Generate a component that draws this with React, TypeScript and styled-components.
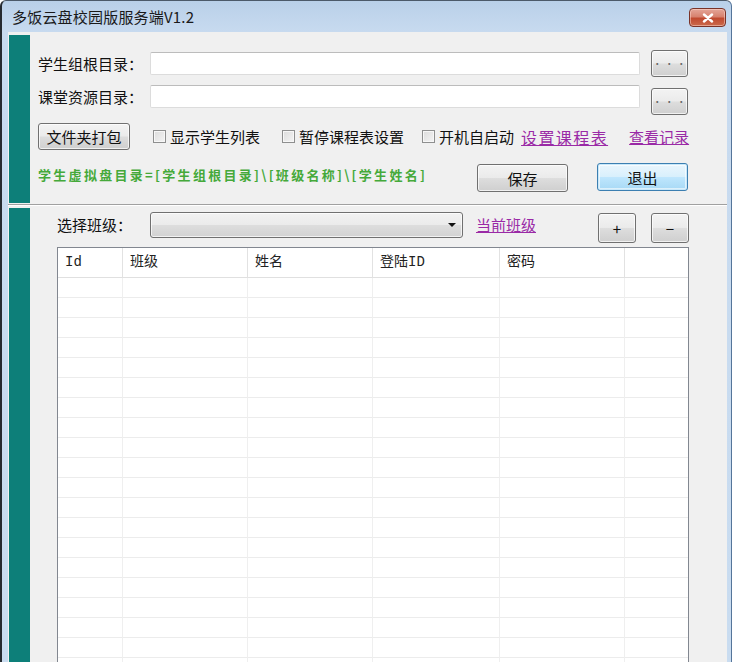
import React from "react";
import styled, { createGlobalStyle, css } from "styled-components";

const GlobalStyle = createGlobalStyle`
  html, body {
    margin: 0;
    padding: 0;
    overflow: hidden;
    background: #ffffff;
  }
  body {
    font-family: "Noto Sans CJK SC", "Noto Sans", sans-serif;
    color: #111;
  }
`;

const GREEN_HINT = "学生虚拟盘目录=[学生组根目录]\\[班级名称]\\[学生姓名]";
const COLUMNS = ["Id", "班级", "姓名", "登陆ID", "密码", ""];
const ROW_COUNT = 20;

export default function App() {
  return (
    <>
      <GlobalStyle />
      <Window>
        <TitleBar>
          <Title>多饭云盘校园版服务端V1.2</Title>
          <CloseButton aria-label="关闭">
            <svg width="12" height="10" viewBox="0 0 12 10">
              <path
                d="M2 1.5 L10 8.5 M10 1.5 L2 8.5"
                stroke="#fff"
                strokeWidth="2.4"
                strokeLinecap="round"
              />
            </svg>
          </CloseButton>
        </TitleBar>

        <Body>
          <TopPanel>
            <Stripe />
            <TopContent>
              <Row>
                <FieldLabel $mt={0} $lh={27}>学生组根目录：</FieldLabel>
                <PathInput $mt={2} />
                <BrowseButton $mt={0}>· · ·</BrowseButton>
              </Row>
              <Row $mt={7}>
                <FieldLabel $mt={1} $lh={23}>课堂资源目录：</FieldLabel>
                <PathInput $mt={1} />
                <BrowseButton $mt={4}>· · ·</BrowseButton>
              </Row>
              <OptionsRow>
                <PackButton>文件夹打包</PackButton>
                <CheckItem $ml={23}>
                  <CheckBox />
                  显示学生列表
                </CheckItem>
                <CheckItem $ml={22}>
                  <CheckBox />
                  暂停课程表设置
                </CheckItem>
                <CheckItem $ml={18}>
                  <CheckBox />
                  开机自启动
                </CheckItem>
                <LinkText $ml={7} $wide>设置课程表</LinkText>
                <LinkText $ml={21}>查看记录</LinkText>
              </OptionsRow>
              <FooterRow>
                <HintText>{GREEN_HINT}</HintText>
                <ActionGroup>
                  <ActionButton $mt={1}>保存</ActionButton>
                  <ActionButton $mt={0} $primary>退出</ActionButton>
                </ActionGroup>
              </FooterRow>
            </TopContent>
          </TopPanel>

          <Divider />

          <BottomPanel>
            <Stripe />
            <BottomContent>
              <ClassRow>
                <ClassLabel>选择班级：</ClassLabel>
                <Combo>
                  <ComboArrow />
                </Combo>
                <LinkText $ml={13} $lh={26}>当前班级</LinkText>
                <SmallButton $ml={62}>+</SmallButton>
                <SmallButton $ml={15}>−</SmallButton>
              </ClassRow>
              <Grid>
                {COLUMNS.map((c, i) => (
                  <HeaderCell key={"h" + i}>{c}</HeaderCell>
                ))}
                {Array.from({ length: ROW_COUNT }).map((_, r) =>
                  COLUMNS.map((_, c) => <Cell key={r + "-" + c} />)
                )}
              </Grid>
            </BottomContent>
          </BottomPanel>
        </Body>
      </Window>
    </>
  );
}

const Window = styled.div`
  width: 732px;
  height: 662px;
  box-sizing: border-box;
  display: flex;
  flex-direction: column;
  overflow: hidden;
  background: linear-gradient(180deg, #b9d0e9 0px, #c7daef 30px, #c9dcf0 100%);
  border-top: 1px solid #4c5a6a;
  border-left: 2px solid #262a30;
  border-right: 1px solid #55759a;
  border-top-left-radius: 6px;
  border-top-right-radius: 6px;
`;

const TitleBar = styled.div`
  height: 31px;
  flex: none;
  display: flex;
  align-items: flex-start;
  justify-content: space-between;
  padding: 0 5px 0 10px;
`;

const Title = styled.div`
  font-size: 15px;
  line-height: 31px;
  color: #1a1a1a;
  letter-spacing: 0.2px;
`;

const CloseButton = styled.div`
  margin-top: 7px;
  width: 37px;
  height: 19px;
  box-sizing: border-box;
  display: flex;
  align-items: center;
  justify-content: center;
  border: 1px solid #7a3328;
  border-radius: 4px;
  background: linear-gradient(
    180deg,
    #e4a699 0%,
    #d7826f 45%,
    #c04a30 55%,
    #cb6a4b 100%
  );
  box-shadow: inset 0 0 0 1px rgba(255, 220, 210, 0.5);
`;

const Body = styled.div`
  flex: 1;
  margin: 0 4px 0 6px;
  background: #f0f0f0;
  display: flex;
  flex-direction: column;
  min-height: 0;
`;

const TopPanel = styled.div`
  height: 172px;
  box-sizing: border-box;
  padding: 3px 0 1px 1px;
  display: flex;
  flex: none;
`;

const Stripe = styled.div`
  width: 21px;
  flex: none;
  background: #0d7f79;
`;

const TopContent = styled.div`
  width: 650px;
  padding: 15px 0 0 8px;
  display: flex;
  flex-direction: column;
`;

const Row = styled.div<{ $mt?: number }>`
  display: flex;
  align-items: flex-start;
  margin-top: ${({ $mt }) => $mt ?? 0}px;
`;

const FieldLabel = styled.div<{ $mt: number; $lh: number }>`
  width: 112px;
  flex: none;
  font-size: 15px;
  margin-top: ${({ $mt }) => $mt}px;
  line-height: ${({ $lh }) => $lh}px;
`;

const PathInput = styled.div<{ $mt: number }>`
  width: 490px;
  height: 23px;
  box-sizing: border-box;
  margin-top: ${({ $mt }) => $mt}px;
  background: #ffffff;
  border: 1px solid #dcdcdc;
  border-top-color: #bcbcbc;
  border-radius: 2px;
`;

const buttonBase = css`
  box-sizing: border-box;
  display: flex;
  align-items: center;
  justify-content: center;
  flex: none;
  border: 1px solid #707070;
  border-radius: 3px;
  background: linear-gradient(
    180deg,
    #f3f3f3 0%,
    #ebebeb 48%,
    #dddddd 52%,
    #cfcfcf 100%
  );
  box-shadow: inset 0 0 0 1px rgba(255, 255, 255, 0.7);
  color: #111;
  font-family: "Noto Sans CJK SC", "Noto Sans", sans-serif;
`;

const BrowseButton = styled.div<{ $mt: number }>`
  ${buttonBase};
  width: 37px;
  height: 27px;
  margin-left: 11px;
  margin-top: ${({ $mt }) => $mt}px;
  font-size: 9px;
  color: #666;
  letter-spacing: 0.5px;
`;

const OptionsRow = styled.div`
  display: flex;
  align-items: center;
  height: 27px;
  margin-top: 8px;
  white-space: nowrap;
`;

const PackButton = styled.div`
  ${buttonBase};
  width: 92px;
  height: 27px;
  font-size: 15px;
`;

const CheckItem = styled.div<{ $ml: number }>`
  display: flex;
  align-items: center;
  gap: 4px;
  margin-left: ${({ $ml }) => $ml}px;
  font-size: 15px;
`;

const CheckBox = styled.span`
  width: 13px;
  height: 13px;
  box-sizing: border-box;
  border: 1px solid #8e8f8f;
  background: linear-gradient(135deg, #dcdcdc 0%, #f4f4f4 100%);
  box-shadow: inset 0 0 0 1px #f7f7f7;
`;

const LinkText = styled.div<{ $ml: number; $wide?: boolean; $lh?: number }>`
  margin-left: ${({ $ml }) => $ml}px;
  color: #9a2aa6;
  text-decoration: underline;
  font-size: ${({ $wide }) => ($wide ? 16 : 15)}px;
  letter-spacing: ${({ $wide }) => ($wide ? 1.4 : 0)}px;
  line-height: ${({ $lh }) => ($lh ? `${$lh}px` : "normal")};
  white-space: nowrap;
`;

const FooterRow = styled.div`
  display: flex;
  align-items: flex-start;
  margin-top: 13px;
`;

const HintText = styled.div`
  font-size: 13px;
  line-height: 24px;
  color: #45a93a;
  font-weight: 700;
  letter-spacing: 2.3px;
  white-space: nowrap;
`;

const ActionGroup = styled.div`
  margin-left: auto;
  display: flex;
  gap: 29px;
`;

const ActionButton = styled.div<{ $mt: number; $primary?: boolean }>`
  ${buttonBase};
  width: 91px;
  height: 28px;
  margin-top: ${({ $mt }) => $mt}px;
  font-size: 15px;
  ${({ $primary }) =>
    $primary &&
    css`
      border-color: #3c7fb1;
      background: linear-gradient(
        180deg,
        #eaf6fd 0%,
        #d9f0fc 48%,
        #bee6fd 52%,
        #a7d9f5 100%
      );
      box-shadow: inset 0 0 0 1px #c8e8fa, inset 0 0 0 2px rgba(255, 255, 255, 0.6);
    `}
`;

const Divider = styled.div`
  height: 2px;
  flex: none;
  box-sizing: border-box;
  border-top: 1px solid #a0a0a0;
  border-bottom: 1px solid #ffffff;
`;

const BottomPanel = styled.div`
  flex: 1;
  display: flex;
  padding: 2px 0 0 1px;
  min-height: 0;
`;

const BottomContent = styled.div`
  width: 632px;
  padding: 4px 0 0 27px;
  display: flex;
  flex-direction: column;
`;

const ClassRow = styled.div`
  display: flex;
  align-items: flex-start;
  height: 31px;
`;

const ClassLabel = styled.div`
  width: 93px;
  flex: none;
  font-size: 15px;
  line-height: 26px;
`;

const Combo = styled.div`
  position: relative;
  width: 313px;
  height: 26px;
  box-sizing: border-box;
  border: 1px solid #707070;
  border-radius: 3px;
  background: linear-gradient(
    180deg,
    #f2f2f2 0%,
    #ebebeb 48%,
    #dddddd 52%,
    #d2d2d2 100%
  );
  box-shadow: inset 0 0 0 1px rgba(255, 255, 255, 0.7);
`;

const ComboArrow = styled.span`
  position: absolute;
  right: 6px;
  top: 10px;
  width: 0;
  height: 0;
  border-left: 4px solid transparent;
  border-right: 4px solid transparent;
  border-top: 4px solid #111;
`;

const SmallButton = styled.div<{ $ml: number }>`
  ${buttonBase};
  width: 38px;
  height: 30px;
  margin-top: 1px;
  margin-left: ${({ $ml }) => $ml}px;
  font-size: 15px;
`;

const Grid = styled.div`
  margin-top: 4px;
  width: 632px;
  box-sizing: border-box;
  display: grid;
  grid-template-columns: 65px 125px 125px 127px 125px 1fr;
  grid-template-rows: 30px;
  grid-auto-rows: 20px;
  background: #ffffff;
  border: 1px solid #828790;
  border-bottom: none;
`;

const HeaderCell = styled.div`
  box-sizing: border-box;
  padding-left: 7px;
  font-family: "Liberation Mono", "Noto Sans CJK SC", monospace;
  font-size: 14px;
  line-height: 29px;
  color: #222;
  border-right: 1px solid #e2e2e2;
  border-bottom: 1px solid #e0e0e0;
  &:nth-child(6) {
    border-right: none;
  }
`;

const Cell = styled.div`
  box-sizing: border-box;
  border-right: 1px solid #efefef;
  border-bottom: 1px solid #ececec;
  &:nth-child(6n) {
    border-right: none;
  }
`;
